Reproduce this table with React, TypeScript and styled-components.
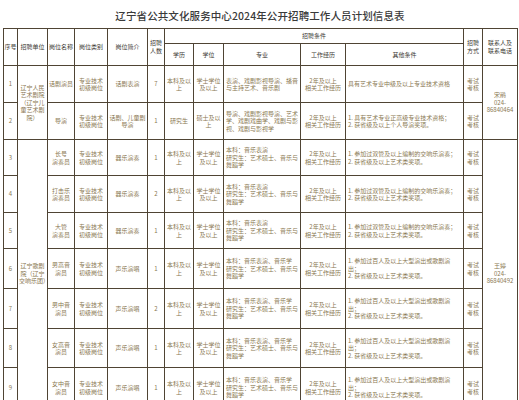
import React from 'react';
import styled, { createGlobalStyle } from 'styled-components';

const GlobalStyle = createGlobalStyle`
  html, body {
    margin: 0;
    padding: 0;
    background: #ffffff;
  }
  body {
    font-family: 'Noto Sans CJK SC', 'Liberation Serif', sans-serif;
  }
`;

const Page = styled.div`
  padding: 9px 2px 0 3px;
  width: 519px;
  box-sizing: border-box;
`;

const Title = styled.h1`
  margin: 0 0 5px;
  height: 14px;
  line-height: 14px;
  font-size: 10.5px;
  font-weight: 500;
  color: #3a3a3a;
  text-align: center;
  letter-spacing: 0.1px;
`;

const Table = styled.table`
  width: 514px;
  table-layout: fixed;
  border-collapse: collapse;
  border: 1px solid #4f4434;
`;

const Col = styled.col<{ $w: number }>`
  width: ${(p) => p.$w}px;
`;

const HeadRow = styled.tr<{ $h: number }>`
  height: ${(p) => p.$h}px;
`;

const Th = styled.th`
  border: 1px solid #4f4434;
  padding: 0;
  font-size: 6px;
  line-height: 8px;
  font-weight: 400;
  color: #3d3a34;
  text-align: center;
  vertical-align: middle;
  white-space: nowrap;
`;

const BodyRow = styled.tr<{ $h: number }>`
  height: ${(p) => p.$h}px;
`;

const Td = styled.td<{ $left?: boolean }>`
  border: 1px solid #4f4434;
  padding: 0 ${(p) => (p.$left ? '2px' : '1px')};
  font-size: 6px;
  line-height: 7.5px;
  color: #8a7852;
  text-align: ${(p) => (p.$left ? 'left' : 'center')};
  vertical-align: middle;
  word-break: break-all;
`;

const Line = styled.div`
  white-space: normal;
`;

type Row = {
  no: number;
  name: string[];
  intro: string;
  count: number;
  degree: string;
  grade: string;
  major: string[];
  other: string[];
};

const cols = [14, 30, 27, 33, 40, 17, 29, 30, 77, 45, 118, 19, 35];
const heights = [37, 37, 36, 37, 36, 40, 40, 39, 40];

const bandRule = ['1. 参加过双管及以上编制的交响乐演奏；', '2. 获省级及以上艺术类奖项。'];
const vocalRule = ['1. 参加过百人及以上大型演出或歌剧演出；', '2. 获省级及以上艺术类奖项。'];
const bandMajor = ['本科：音乐表演', '研究生：艺术硕士、音乐与舞蹈学'];
const vocalMajor = ['本科：音乐表演、音乐学', '研究生：艺术硕士、音乐与舞蹈学'];

const rows: Row[] = [
  {
    no: 1,
    name: ['话剧演员'],
    intro: '话剧表演',
    count: 7,
    degree: '本科及以上',
    grade: '学士学位及以上',
    major: ['表演、戏剧影视导演、播音与主持艺术、音乐剧'],
    other: ['具有艺术专业中级及以上专业技术资格'],
  },
  {
    no: 2,
    name: ['导演'],
    intro: '话剧、儿童剧导演',
    count: 1,
    degree: '研究生',
    grade: '硕士及以上',
    major: ['导演、戏剧影视导演、艺术学、戏剧戏曲学、戏剧与影视、戏剧与影视学'],
    other: ['1. 具有艺术专业正高级专业技术资格；', '2. 获省级及以上个人导演奖项。'],
  },
  { no: 3, name: ['长号', '演奏员'], intro: '器乐演奏', count: 1, degree: '本科及以上', grade: '学士学位及以上', major: bandMajor, other: bandRule },
  { no: 4, name: ['打击乐', '演奏员'], intro: '器乐演奏', count: 2, degree: '本科及以上', grade: '学士学位及以上', major: bandMajor, other: bandRule },
  { no: 5, name: ['大管', '演奏员'], intro: '器乐演奏', count: 1, degree: '本科及以上', grade: '学士学位及以上', major: bandMajor, other: bandRule },
  { no: 6, name: ['男高音', '演员'], intro: '声乐演唱', count: 1, degree: '本科及以上', grade: '学士学位及以上', major: vocalMajor, other: vocalRule },
  { no: 7, name: ['男中音', '演员'], intro: '声乐演唱', count: 2, degree: '本科及以上', grade: '学士学位及以上', major: vocalMajor, other: vocalRule },
  { no: 8, name: ['女高音', '演员'], intro: '声乐演唱', count: 1, degree: '本科及以上', grade: '学士学位及以上', major: vocalMajor, other: vocalRule },
  { no: 9, name: ['女中音', '演员'], intro: '声乐演唱', count: 1, degree: '本科及以上', grade: '学士学位及以上', major: vocalMajor, other: vocalRule },
];

// units and contacts span several rows
const groups: Record<number, { span: number; unit: string; contact: string[] }> = {
  0: { span: 2, unit: '辽宁人民艺术剧院（辽宁儿童艺术剧院）', contact: ['宋鹃', '024-', '86840464'] },
  2: { span: 7, unit: '辽宁歌剧院（辽宁交响乐团）', contact: ['王婷', '024-', '86840492'] },
};

const App: React.FC = () => {
  return (
    <Page>
      <GlobalStyle />
      <Title>辽宁省公共文化服务中心2024年公开招聘工作人员计划信息表</Title>
      <Table>
        <colgroup>
          {cols.map((w, i) => (
            <Col key={i} $w={w} />
          ))}
        </colgroup>
        <thead>
          <HeadRow $h={15}>
            <Th rowSpan={2}>序号</Th>
            <Th rowSpan={2}>招聘单位</Th>
            <Th rowSpan={2}>岗位名称</Th>
            <Th rowSpan={2}>岗位类别</Th>
            <Th rowSpan={2}>岗位简介</Th>
            <Th rowSpan={2}>
              招聘
              <br />
              人数
            </Th>
            <Th colSpan={5}>招聘条件</Th>
            <Th rowSpan={2}>
              招聘
              <br />
              方式
            </Th>
            <Th rowSpan={2}>
              联系人及
              <br />
              联系电话
            </Th>
          </HeadRow>
          <HeadRow $h={22}>
            <Th>学历</Th>
            <Th>学位</Th>
            <Th>专业</Th>
            <Th>工作经历</Th>
            <Th>其他条件</Th>
          </HeadRow>
        </thead>
        <tbody>
          {rows.map((r, i) => {
            const g = groups[i];
            return (
              <BodyRow key={r.no} $h={heights[i]}>
                <Td>{r.no}</Td>
                {g && <Td rowSpan={g.span}>{g.unit}</Td>}
                <Td>
                  {r.name.map((n) => (
                    <Line key={n}>{n}</Line>
                  ))}
                </Td>
                <Td>
                  专业技术
                  <br />
                  初级岗位
                </Td>
                <Td>{r.intro}</Td>
                <Td>{r.count}</Td>
                <Td>{r.degree}</Td>
                <Td>{r.grade}</Td>
                <Td $left>
                  {r.major.map((m) => (
                    <Line key={m}>{m}</Line>
                  ))}
                </Td>
                <Td>
                  2年及以上
                  <br />
                  相关工作经历
                </Td>
                <Td $left>
                  {r.other.map((o) => (
                    <Line key={o}>{o}</Line>
                  ))}
                </Td>
                <Td>
                  考试
                  <br />
                  考核
                </Td>
                {g && (
                  <Td rowSpan={g.span}>
                    {g.contact.map((c) => (
                      <Line key={c}>{c}</Line>
                    ))}
                  </Td>
                )}
              </BodyRow>
            );
          })}
        </tbody>
      </Table>
    </Page>
  );
};

export default App;
